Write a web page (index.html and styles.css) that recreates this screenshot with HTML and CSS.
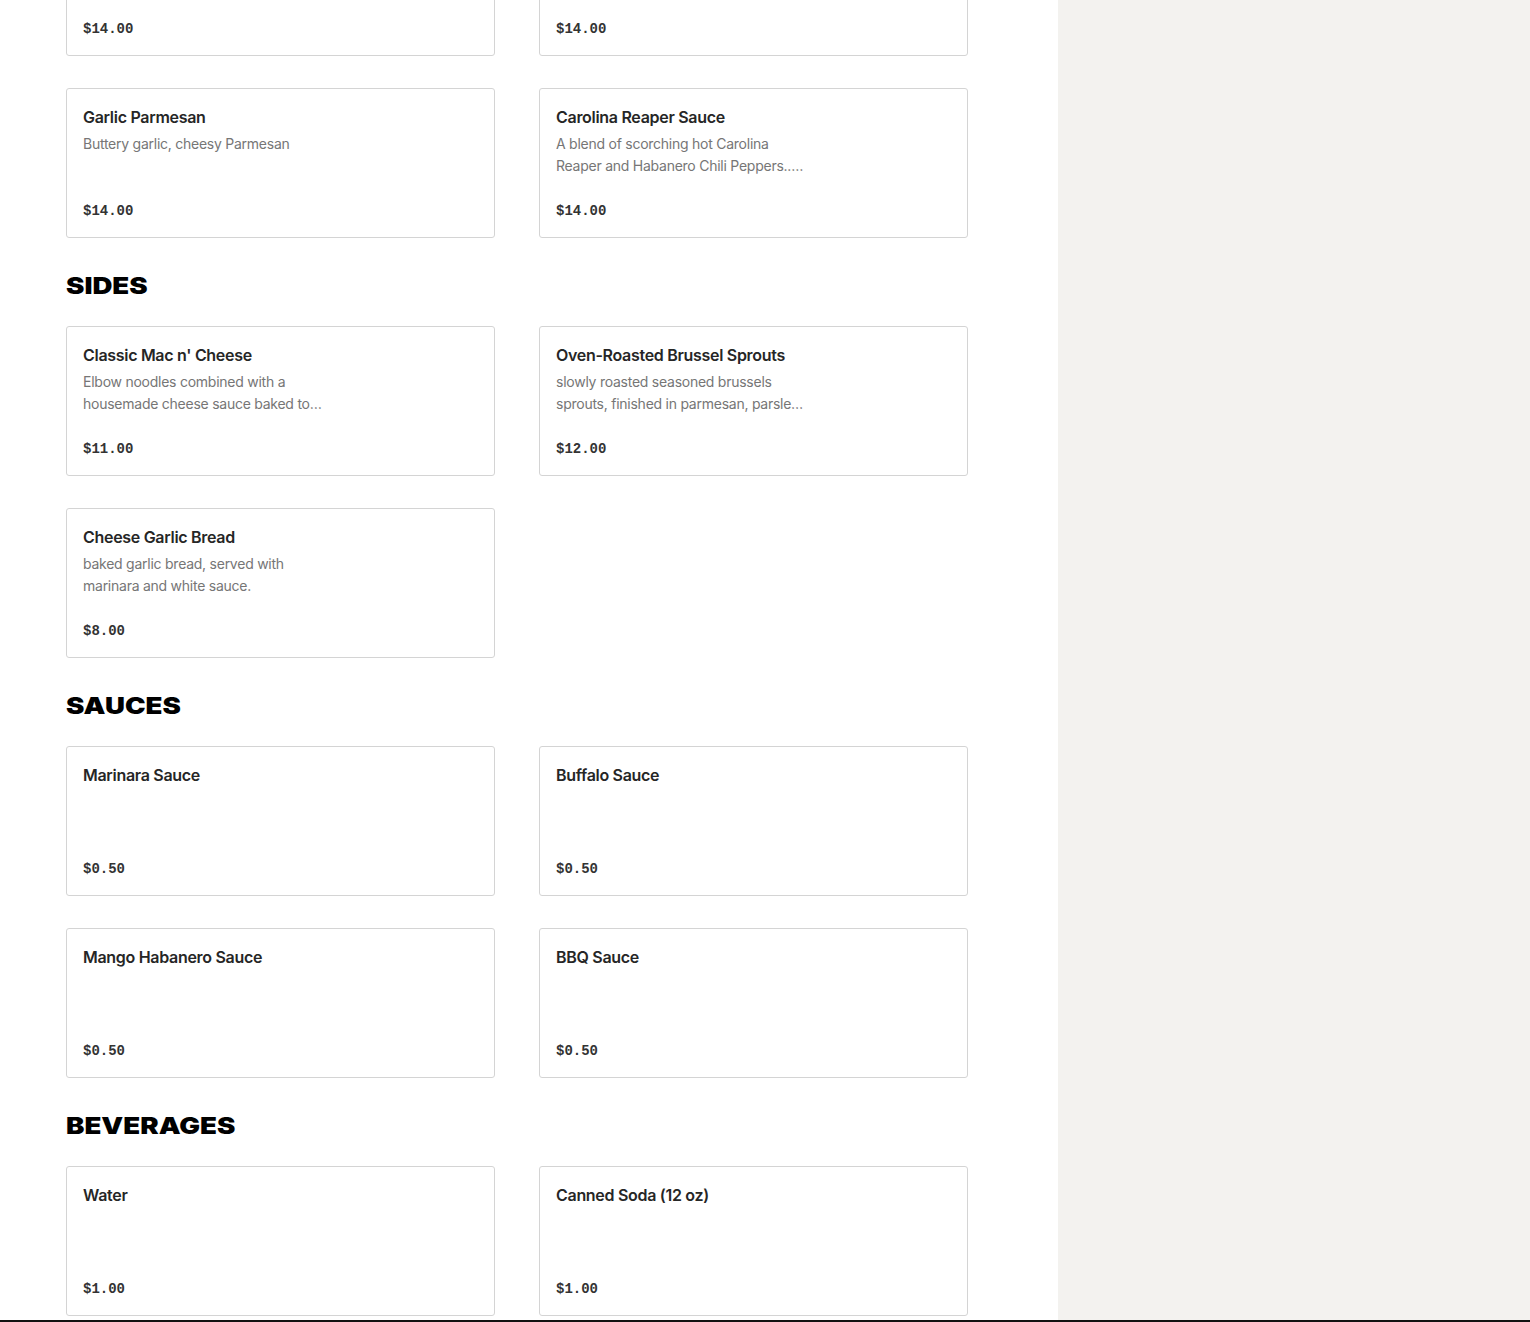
FILE: index.html
```html
<!DOCTYPE html>
<html lang="en">
<head>
    <meta charset="UTF-8">
    <meta name="viewport" content="width=device-width, initial-scale=1.0">
    <title>Menu</title>
    <link rel="stylesheet" href="styles.css">
</head>
<body>
    <div class="layout">
        <main class="menu-column">
            <div class="menu">
                <section class="menu-section">
                    <div class="item-grid">
                        <div class="item-card">
                            <h3 class="item-name">Lemon Pepper</h3>
                            <p class="item-desc">Zesty lemon and cracked black pepper</p>
                            <div class="item-price">$14.00</div>
                        </div>
                        <div class="item-card">
                            <h3 class="item-name">Honey Hot</h3>
                            <p class="item-desc">Sweet honey with a spicy kick</p>
                            <div class="item-price">$14.00</div>
                        </div>
                        <div class="item-card">
                            <h3 class="item-name">Garlic Parmesan</h3>
                            <p class="item-desc">Buttery garlic, cheesy Parmesan</p>
                            <div class="item-price">$14.00</div>
                        </div>
                        <div class="item-card">
                            <h3 class="item-name">Carolina Reaper Sauce</h3>
                            <p class="item-desc">A blend of scorching hot Carolina Reaper and Habanero Chili Peppers.. Not for the faint of heart.</p>
                            <div class="item-price">$14.00</div>
                        </div>
                    </div>
                </section>

                <section class="menu-section">
                    <h2 class="section-title">Sides</h2>
                    <div class="item-grid">
                        <div class="item-card">
                            <h3 class="item-name">Classic Mac n' Cheese</h3>
                            <p class="item-desc">Elbow noodles combined with a housemade cheese sauce baked to perfection.</p>
                            <div class="item-price">$11.00</div>
                        </div>
                        <div class="item-card">
                            <h3 class="item-name">Oven-Roasted Brussel Sprouts</h3>
                            <p class="item-desc">slowly roasted seasoned brussels sprouts, finished in parmesan, parsley and lemon.</p>
                            <div class="item-price">$12.00</div>
                        </div>
                        <div class="item-card">
                            <h3 class="item-name">Cheese Garlic Bread</h3>
                            <p class="item-desc">baked garlic bread, served with marinara and white sauce.</p>
                            <div class="item-price">$8.00</div>
                        </div>
                    </div>
                </section>

                <section class="menu-section">
                    <h2 class="section-title">Sauces</h2>
                    <div class="item-grid">
                        <div class="item-card">
                            <h3 class="item-name">Marinara Sauce</h3>
                            <div class="item-price">$0.50</div>
                        </div>
                        <div class="item-card">
                            <h3 class="item-name">Buffalo Sauce</h3>
                            <div class="item-price">$0.50</div>
                        </div>
                        <div class="item-card">
                            <h3 class="item-name">Mango Habanero Sauce</h3>
                            <div class="item-price">$0.50</div>
                        </div>
                        <div class="item-card">
                            <h3 class="item-name">BBQ Sauce</h3>
                            <div class="item-price">$0.50</div>
                        </div>
                    </div>
                </section>

                <section class="menu-section">
                    <h2 class="section-title">Beverages</h2>
                    <div class="item-grid">
                        <div class="item-card">
                            <h3 class="item-name">Water</h3>
                            <div class="item-price">$1.00</div>
                        </div>
                        <div class="item-card">
                            <h3 class="item-name">Canned Soda (12 oz)</h3>
                            <div class="item-price">$1.00</div>
                        </div>
                    </div>
                </section>
            </div>
        </main>
        <aside class="side-panel"></aside>
    </div>
    <div class="bottom-bar"></div>
</body>
</html>
```

FILE: styles.css
```css
* {
    margin: 0;
    padding: 0;
    box-sizing: border-box;
}

body {
    font-family: 'Inter', 'Liberation Sans', sans-serif;
    background: white;
    color: #262626;
    overflow: hidden;
    height: 100vh;
    display: flex;
    flex-direction: column;
}

.layout {
    flex: 1;
    display: grid;
    grid-template-columns: 1058px 1fr;
    min-height: 0;
}

.menu-column {
    overflow: hidden;
    padding: 0 90px 0 66px;
}

.side-panel {
    background: #f3f2ef;
}

.bottom-bar {
    height: 2px;
    background: #111;
}

/* list is scrolled part way down */
.menu {
    margin-top: -94px;
}

.menu-section + .menu-section {
    margin-top: 32px;
}

.section-title {
    font-family: 'Inter', sans-serif;
    font-weight: 900;
    font-size: 23px;
    line-height: 32px;
    text-transform: uppercase;
    color: #000;
    transform: scaleX(1.2);
    transform-origin: left center;
    margin-bottom: 24px;
}

.item-grid {
    display: grid;
    grid-template-columns: repeat(2, 429px);
    column-gap: 44px;
    row-gap: 32px;
}

.item-card {
    height: 150px;
    border: 1px solid #d4d4d4;
    border-radius: 3px;
    padding: 16px;
    display: flex;
    flex-direction: column;
}

.item-name {
    font-size: 16px;
    line-height: 24px;
    font-weight: 600;
    letter-spacing: -0.3px;
    color: #262626;
}

.item-desc {
    margin-top: 4px;
    max-width: 250px;
    font-size: 14px;
    line-height: 22px;
    letter-spacing: -0.25px;
    color: #767676;
    display: -webkit-box;
    -webkit-line-clamp: 2;
    -webkit-box-orient: vertical;
    overflow: hidden;
}

.item-price {
    margin-top: auto;
    font-family: 'Liberation Mono', 'DejaVu Sans Mono', monospace;
    font-size: 14px;
    line-height: 20px;
    font-weight: 700;
    color: #333;
}
```
